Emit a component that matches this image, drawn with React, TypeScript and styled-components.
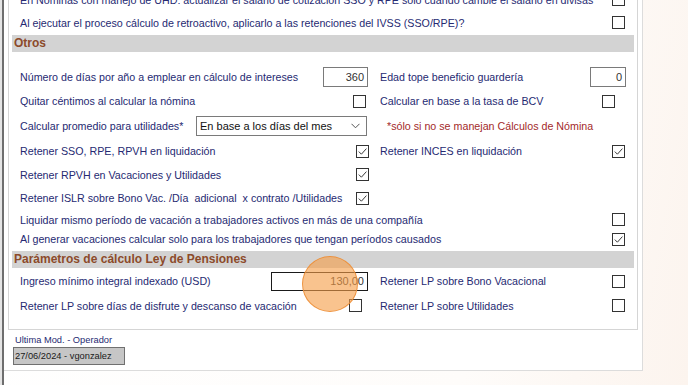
import React from 'react'
import styled, { createGlobalStyle } from 'styled-components'

const GlobalStyle = createGlobalStyle`
  html, body {
    margin: 0;
    padding: 0;
  }
  body {
    width: 688px;
    height: 385px;
    overflow: hidden;
    background: linear-gradient(100deg, #ffffff 0%, #fefcfa 70%, #fcf4ee 100%);
    font-family: "Liberation Sans", Arial, sans-serif;
  }
`

const Frame = styled.div`
  height: 385px;
  margin-left: 2px;
  border-left: 2px solid #6e6e6e;
  box-shadow: -2px 0 0 #e4e4e4;
`

const Panel = styled.div`
  position: relative;
  width: 638px;
  height: 370px;
  background: #fff;
  border-right: 1px solid #dcdcdc;
  border-bottom: 1px solid #dcdcdc;
  overflow: hidden;
`

const GroupBox = styled.div`
  box-sizing: border-box;
  width: 630px;
  margin: -13px 0 0 4px;
  border: 1px solid #d5d5d5;
  padding-bottom: 12px;
`

const Row = styled.div<{ h: number; full?: boolean }>`
  display: grid;
  grid-template-columns: ${(p) => (p.full ? '1fr' : '363px 1fr')};
  height: ${(p) => p.h}px;
`

const Cell = styled.div<{ pl?: number; pr?: number }>`
  display: flex;
  align-items: center;
  justify-content: space-between;
  padding-left: ${(p) => p.pl ?? 11}px;
  padding-right: ${(p) => p.pr ?? 3}px;
  min-width: 0;
`

const Label = styled.span`
  font-size: 10.7px;
  color: #262a72;
  white-space: nowrap;
`

const Note = styled.span`
  font-size: 10.7px;
  color: #a32a2a;
  white-space: nowrap;
`

const Header = styled.div<{ mt: number; mb: number }>`
  height: 17px;
  margin: ${(p) => p.mt}px 3px ${(p) => p.mb}px;
  padding-left: 2px;
  background: #d3d3d3;
  font-size: 12px;
  line-height: 17px;
  font-weight: bold;
  color: #8c4a2a;
`

const Box = styled.span`
  box-sizing: border-box;
  display: grid;
  place-items: center;
  width: 13px;
  height: 13px;
  flex-shrink: 0;
  border: 1px solid #333;
  background: #fff;
`

const NumberBox = styled.div<{ w: number; h?: number; strong?: boolean }>`
  box-sizing: border-box;
  width: ${(p) => p.w}px;
  height: ${(p) => p.h ?? 20}px;
  padding-right: 3px;
  border: 1px solid ${(p) => (p.strong ? '#1a1a1a' : '#7a7a7a')};
  background: #fff;
  font-size: 11px;
  line-height: ${(p) => (p.h ?? 20) - 2}px;
  text-align: right;
  color: #333;
`

const Select = styled.div`
  box-sizing: border-box;
  display: flex;
  align-items: center;
  justify-content: space-between;
  width: 171px;
  height: 20px;
  padding: 0 6px 0 3px;
  border: 1px solid #7a7a7a;
  background: #fff;
  font-size: 11px;
  color: #111;
  white-space: nowrap;
`

const Footer = styled.div`
  display: flex;
  flex-direction: column;
  align-items: flex-start;
`

const FooterLabel = styled.span`
  margin: 4px 0 0 11px;
  font-size: 9.3px;
  line-height: 12px;
  color: #262a72;
`

const Stamp = styled.div`
  box-sizing: border-box;
  width: 112px;
  height: 18px;
  margin: 1px 0 0 9px;
  padding-left: 1px;
  border: 1px solid #707070;
  background: #c6c6c6;
  font-size: 9.3px;
  line-height: 16px;
  color: #1a1a1a;
`

const ClickMark = styled.div`
  position: absolute;
  left: 298px;
  top: 256px;
  width: 56px;
  height: 56px;
  box-sizing: border-box;
  border-radius: 50%;
  background: rgba(246, 158, 72, 0.62);
  border: 1.5px solid rgba(236, 140, 50, 0.85);
  pointer-events: none;
`

function Check({ checked }: { checked?: boolean }) {
  return (
    <Box>
      {checked && (
        <svg width="11" height="11" viewBox="0 0 11 11">
          <path d="M1.8 5.6 L4.4 8.2 L9.4 2.6" fill="none" stroke="#3a3a3a" strokeWidth="1" />
        </svg>
      )}
    </Box>
  )
}

export default function App() {
  return (
    <>
      <GlobalStyle />
      <Frame>
        <Panel>
          <GroupBox>
            <Row h={23} full>
              <Cell pr={12}>
                <Label>
                  En Nóminas con manejo de UHD: actualizar el salario de cotización SSO y RPE sólo cuando cambie el salario en divisas
                </Label>
                <Check />
              </Cell>
            </Row>
            <Row h={23} full>
              <Cell pr={12}>
                <Label>Al ejecutar el proceso cálculo de retroactivo, aplicarlo a las retenciones del IVSS (SSO/RPE)?</Label>
                <Check />
              </Cell>
            </Row>

            <Header mt={1} mb={13}>Otros</Header>

            <Row h={24}>
              <Cell pr={4}>
                <Label>Número de días por año a emplear en cálculo de intereses</Label>
                <NumberBox w={45}>360</NumberBox>
              </Cell>
              <Cell pl={8} pr={11}>
                <Label>Edad tope beneficio guardería</Label>
                <NumberBox w={36}>0</NumberBox>
              </Cell>
            </Row>
            <Row h={24}>
              <Cell pr={6}>
                <Label>Quitar céntimos al calcular la nómina</Label>
                <Check />
              </Cell>
              <Cell pl={8} pr={22}>
                <Label>Calcular en base a la tasa de BCV</Label>
                <Check />
              </Cell>
            </Row>
            <Row h={26}>
              <Cell pr={5}>
                <Label>Calcular promedio para utilidades*</Label>
                <Select>
                  En base a los días del mes
                  <svg width="9" height="6" viewBox="0 0 9 6">
                    <path d="M0.5 0.8 L4.5 4.8 L8.5 0.8" fill="none" stroke="#555" strokeWidth="1" />
                  </svg>
                </Select>
              </Cell>
              <Cell pl={15}>
                <Note>*sólo si no se manejan Cálculos de Nómina</Note>
              </Cell>
            </Row>
            <Row h={24}>
              <Cell>
                <Label>Retener SSO, RPE, RPVH en liquidación</Label>
                <Check checked />
              </Cell>
              <Cell pl={8} pr={12}>
                <Label>Retener INCES en liquidación</Label>
                <Check checked />
              </Cell>
            </Row>
            <Row h={23}>
              <Cell>
                <Label>Retener RPVH en Vacaciones y Utilidades</Label>
                <Check checked />
              </Cell>
            </Row>
            <Row h={24}>
              <Cell>
                <Label>Retener ISLR sobre Bono Vac. /Día&nbsp; adicional&nbsp; x contrato /Utilidades</Label>
                <Check checked />
              </Cell>
            </Row>
            <Row h={19} full>
              <Cell pr={12}>
                <Label>Liquidar mismo período de vacación a trabajadores activos en más de una compañía</Label>
                <Check />
              </Cell>
            </Row>
            <Row h={20} full>
              <Cell pr={12}>
                <Label>Al generar vacaciones calcular solo para los trabajadores que tengan períodos causados</Label>
                <Check checked />
              </Cell>
            </Row>

            <Header mt={2} mb={0}>Parámetros de cálculo Ley de Pensiones</Header>

            <Row h={26}>
              <Cell pr={4}>
                <Label>Ingreso mínimo integral indexado (USD)</Label>
                <NumberBox w={97} h={19} strong>130,00</NumberBox>
              </Cell>
              <Cell pl={8} pr={12}>
                <Label>Retener LP sobre Bono Vacacional</Label>
                <Check />
              </Cell>
            </Row>
            <Row h={23}>
              <Cell pr={10}>
                <Label>Retener LP sobre días de disfrute y descanso de vacación</Label>
                <Check />
              </Cell>
              <Cell pl={8} pr={12}>
                <Label>Retener LP sobre Utilidades</Label>
                <Check />
              </Cell>
            </Row>
          </GroupBox>

          <Footer>
            <FooterLabel>Ultima Mod. - Operador</FooterLabel>
            <Stamp>27/06/2024 - vgonzalez</Stamp>
          </Footer>

          <ClickMark />
        </Panel>
      </Frame>
    </>
  )
}
